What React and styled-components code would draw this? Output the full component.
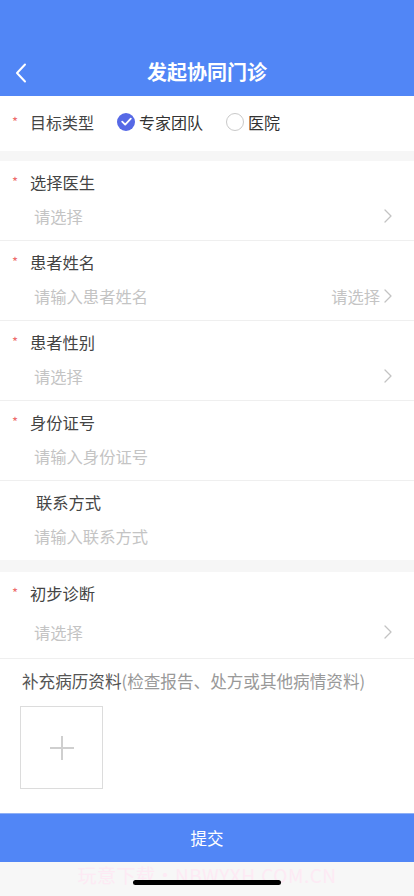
import React from "react";
import styled, { createGlobalStyle } from "styled-components";

const GlobalStyle = createGlobalStyle`
  html, body {
    margin: 0;
    padding: 0;
    background: #ffffff;
    font-family: "Noto Sans CJK SC", "Noto Sans", sans-serif;
  }
  * {
    box-sizing: border-box;
  }
`;

const Page = styled.div`
  width: 414px;
  height: 896px;
  display: flex;
  flex-direction: column;
  background: #fff;
  overflow: hidden;
`;

const Header = styled.div`
  height: 97px;
  background: #5186f6;
  padding-top: 48px;
  display: flex;
  align-items: center;
  position: relative;
`;

const BackBtn = styled.div`
  position: absolute;
  left: 9px;
  top: 61px;
  width: 24px;
  height: 24px;
  display: flex;
  align-items: center;
  justify-content: center;
`;

const Title = styled.div`
  flex: 1;
  text-align: center;
  color: #fff;
  font-size: 20px;
  font-weight: 700;
  line-height: 48px;
`;

const TypeRow = styled.div`
  height: 55px;
  display: flex;
  align-items: center;
  padding-left: 10px;
  padding-bottom: 3px;
`;

const Star = styled.span`
  width: 20px;
  color: #ee6b6b;
  font-size: 13px;
  line-height: 16px;
  text-align: left;
  padding-left: 2px;
  align-self: ${(p) => (p.$center ? "center" : "flex-start")};
  margin-top: ${(p) => (p.$center ? 0 : 3)}px;
`;

const TypeLabel = styled.span`
  font-size: 16px;
  color: #444;
  margin-right: 22px;
`;

const Radio = styled.label`
  display: flex;
  align-items: center;
  font-size: 16px;
  color: #333;
  margin-right: 22px;
  gap: 4px;
`;

const RadioDot = styled.span`
  width: 18px;
  height: 18px;
  border-radius: 50%;
  border: ${(p) => (p.$checked ? "none" : "1.5px solid #c9c9c9")};
  background: ${(p) => (p.$checked ? "#5669e6" : "#fff")};
  display: flex;
  align-items: center;
  justify-content: center;
  margin-left: 1px;
`;

const Gap = styled.div`
  height: ${(p) => p.$h || 11}px;
  background: #f6f6f6;
`;

const Field = styled.div`
  padding: 10px 0 ${(p) => p.$pb || 13}px 10px;
  border-bottom: ${(p) => (p.$last ? "none" : "1px solid #efefef")};
`;

const LabelLine = styled.div`
  display: flex;
  align-items: center;
  height: 22px;
`;

const Label = styled.span`
  font-size: 16.3px;
  color: #444;
  margin-left: ${(p) => (p.$plain ? 26 : 0)}px;
`;

const ValueLine = styled.div`
  display: flex;
  align-items: center;
  height: 22px;
  margin-top: ${(p) => p.$mt || 12}px;
  padding-left: 24px;
  padding-right: 22px;
`;

const Placeholder = styled.span`
  flex: 1;
  font-size: 16.3px;
  color: #c4c4c4;
`;

const Extra = styled.span`
  font-size: 16.3px;
  color: #c4c4c4;
  margin-right: 4px;
`;

const Upload = styled.div`
  padding: 11px 0 24px 20px;
`;

const UploadTitle = styled.div`
  font-size: 16.6px;
  color: #555;
  line-height: 22px;
  padding-left: 2px;
  margin-bottom: 14px;

  span {
    color: #999;
  }
`;

const UploadBox = styled.div`
  width: 83px;
  height: 83px;
  border: 1.5px solid #dcdcdc;
  display: flex;
  align-items: center;
  justify-content: center;
`;

const Spacer = styled.div`
  flex: 1;
`;

const Submit = styled.div`
  height: 49px;
  background: #5186f6;
  color: #fff;
  font-size: 16.5px;
  display: flex;
  align-items: center;
  justify-content: center;
  border-top: 1px solid #8fb0f5;
`;

const Bottom = styled.div`
  height: 35px;
  background: #f7f7f7;
  display: flex;
  flex-direction: column;
  align-items: center;
  position: relative;
`;

const Watermark = styled.div`
  font-size: 19px;
  color: #fdeaf4;
  line-height: 24px;
  margin-top: 1px;
  letter-spacing: 0.5px;
`;

const HomeBar = styled.div`
  position: absolute;
  top: 18px;
  width: 148px;
  height: 5px;
  border-radius: 3px;
  background: #000;
`;

const Chevron = () => (
  <svg width="8" height="14" viewBox="0 0 8 14" fill="none">
    <path d="M1 1l6 6-6 6" stroke="#c3c3c3" strokeWidth="1.3" strokeLinecap="round" strokeLinejoin="round" />
  </svg>
);

const SelectField = ({ label, placeholder, extra, required = true, chevron, mt, pb, last }) => (
  <Field $pb={pb} $last={last}>
    <LabelLine>
      {required && <Star>*</Star>}
      <Label $plain={!required}>{label}</Label>
    </LabelLine>
    <ValueLine $mt={mt}>
      <Placeholder>{placeholder}</Placeholder>
      {extra && <Extra>{extra}</Extra>}
      {chevron && <Chevron />}
    </ValueLine>
  </Field>
);

export default function App() {
  return (
    <Page>
      <GlobalStyle />
      <Header>
        <BackBtn>
          <svg width="12" height="20" viewBox="0 0 12 20" fill="none">
            <path d="M10 1.5L2 10l8 8.5" stroke="#fff" strokeWidth="2" strokeLinecap="round" strokeLinejoin="round" />
          </svg>
        </BackBtn>
        <Title>发起协同门诊</Title>
      </Header>

      <TypeRow>
        <Star $center>*</Star>
        <TypeLabel>目标类型</TypeLabel>
        <Radio>
          <RadioDot $checked>
            <svg width="11" height="9" viewBox="0 0 11 9" fill="none">
              <path d="M1.2 4.6l3 3L9.8 1.6" stroke="#fff" strokeWidth="1.8" strokeLinecap="round" strokeLinejoin="round" />
            </svg>
          </RadioDot>
          专家团队
        </Radio>
        <Radio>
          <RadioDot />
          医院
        </Radio>
      </TypeRow>

      <Gap />

      <SelectField label="选择医生" placeholder="请选择" chevron />
      <SelectField label="患者姓名" placeholder="请输入患者姓名" extra="请选择" chevron />
      <SelectField label="患者性别" placeholder="请选择" chevron />
      <SelectField label="身份证号" placeholder="请输入身份证号" />
      <SelectField label="联系方式" placeholder="请输入联系方式" required={false} last />

      <Gap $h={12} />

      <SelectField label="初步诊断" placeholder="请选择" chevron mt={17} pb={15} />

      <Upload>
        <UploadTitle>
          补充病历资料<span>(检查报告、处方或其他病情资料)</span>
        </UploadTitle>
        <UploadBox>
          <svg width="26" height="26" viewBox="0 0 26 26" fill="none">
            <path d="M13 1v24M1 13h24" stroke="#cfcfcf" strokeWidth="2" />
          </svg>
        </UploadBox>
      </Upload>

      <Spacer />

      <Submit>提交</Submit>
      <Bottom>
        <Watermark>玩意下载・NBWYXH.COM.CN</Watermark>
        <HomeBar />
      </Bottom>
    </Page>
  );
}
